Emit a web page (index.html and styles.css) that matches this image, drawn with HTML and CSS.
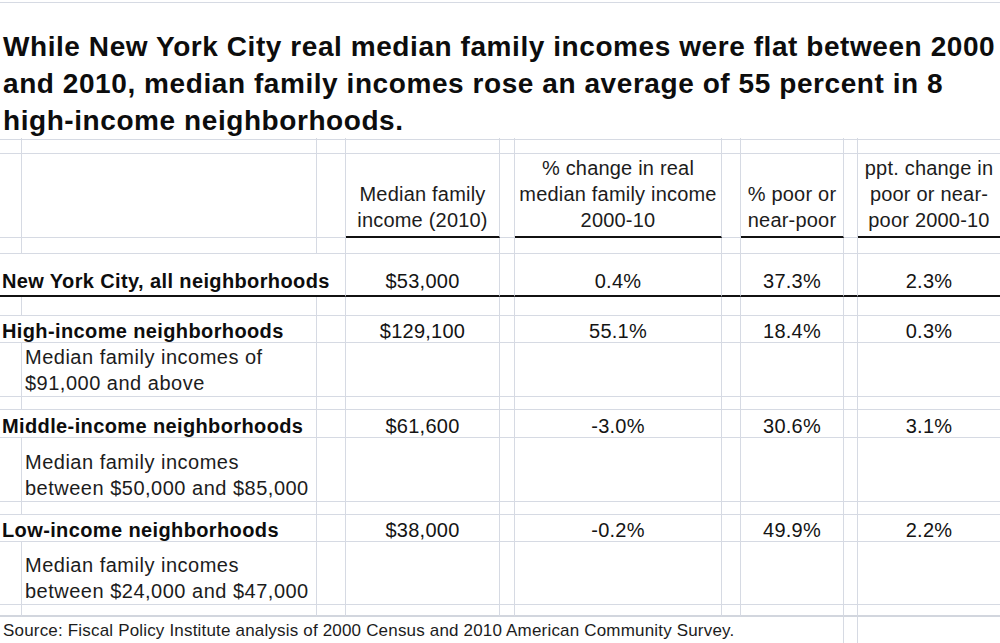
FILE: index.html
```html
<!DOCTYPE html>
<html lang="en">
<head>
<meta charset="utf-8">
<title>NYC median family incomes by neighborhood</title>
<link rel="stylesheet" href="styles.css">
</head>
<body>
<div class="sheet">
  <div class="row r-top"><div class="c span10"></div></div>

  <div class="row r-title">
    <div class="c span10 title">While New York City real median family incomes were flat between 2000<br>and 2010, median family incomes rose an average of 55 percent in 8<br>high-income neighborhoods.</div>
  </div>

  <div class="row r-g16"><div class="c"></div><div class="c"></div><div class="c"></div><div class="c"></div><div class="c"></div><div class="c"></div><div class="c"></div><div class="c"></div><div class="c"></div><div class="c"></div></div>

  <div class="row r-head">
    <div class="c"></div><div class="c"></div><div class="c"></div>
    <div class="c ctr hd">Median family<br>income (2010)</div>
    <div class="c"></div>
    <div class="c ctr hd">% change in real<br>median family income<br>2000-10</div>
    <div class="c"></div>
    <div class="c ctr hd">% poor or<br>near-poor</div>
    <div class="c"></div>
    <div class="c ctr hd">ppt. change in<br>poor or near-<br>poor 2000-10</div>
  </div>

  <div class="row r-g16"><div class="c"></div><div class="c"></div><div class="c"></div><div class="c"></div><div class="c"></div><div class="c"></div><div class="c"></div><div class="c"></div><div class="c"></div><div class="c"></div></div>

  <div class="row r-nyc total">
    <div class="c span3 lab">New York City, all neighborhoods</div>
    <div class="c ctr val">$53,000</div>
    <div class="c"></div>
    <div class="c ctr val">0.4%</div>
    <div class="c"></div>
    <div class="c ctr val">37.3%</div>
    <div class="c"></div>
    <div class="c ctr val">2.3%</div>
  </div>

  <div class="row r-g19"><div class="c"></div><div class="c"></div><div class="c"></div><div class="c"></div><div class="c"></div><div class="c"></div><div class="c"></div><div class="c"></div><div class="c"></div><div class="c"></div></div>

  <div class="row r-lab27 group">
    <div class="c span2 lab">High-income neighborhoods</div>
    <div class="c"></div>
    <div class="c ctr val">$129,100</div>
    <div class="c"></div>
    <div class="c ctr val">55.1%</div>
    <div class="c"></div>
    <div class="c ctr val">18.4%</div>
    <div class="c"></div>
    <div class="c ctr val">0.3%</div>
  </div>
  <div class="row r-sub54">
    <div class="c"></div>
    <div class="c sub">Median family incomes of<br>$91,000 and above</div>
    <div class="c"></div><div class="c"></div><div class="c"></div><div class="c"></div><div class="c"></div><div class="c"></div><div class="c"></div><div class="c"></div>
  </div>

  <div class="row r-g13"><div class="c"></div><div class="c"></div><div class="c"></div><div class="c"></div><div class="c"></div><div class="c"></div><div class="c"></div><div class="c"></div><div class="c"></div><div class="c"></div></div>

  <div class="row r-lab28 group">
    <div class="c span2 lab">Middle-income neighborhoods</div>
    <div class="c"></div>
    <div class="c ctr val">$61,600</div>
    <div class="c"></div>
    <div class="c ctr val">-3.0%</div>
    <div class="c"></div>
    <div class="c ctr val">30.6%</div>
    <div class="c"></div>
    <div class="c ctr val">3.1%</div>
  </div>
  <div class="row r-sub64">
    <div class="c"></div>
    <div class="c sub">Median family incomes<br>between $50,000 and $85,000</div>
    <div class="c"></div><div class="c"></div><div class="c"></div><div class="c"></div><div class="c"></div><div class="c"></div><div class="c"></div><div class="c"></div>
  </div>

  <div class="row r-g13"><div class="c"></div><div class="c"></div><div class="c"></div><div class="c"></div><div class="c"></div><div class="c"></div><div class="c"></div><div class="c"></div><div class="c"></div><div class="c"></div></div>

  <div class="row r-lab27 group">
    <div class="c span2 lab">Low-income neighborhoods</div>
    <div class="c"></div>
    <div class="c ctr val">$38,000</div>
    <div class="c"></div>
    <div class="c ctr val">-0.2%</div>
    <div class="c"></div>
    <div class="c ctr val">49.9%</div>
    <div class="c"></div>
    <div class="c ctr val">2.2%</div>
  </div>
  <div class="row r-sub63">
    <div class="c"></div>
    <div class="c sub">Median family incomes<br>between $24,000 and $47,000</div>
    <div class="c"></div><div class="c"></div><div class="c"></div><div class="c"></div><div class="c"></div><div class="c"></div><div class="c"></div><div class="c"></div>
  </div>

  <div class="row r-g12 end"><div class="c"></div><div class="c"></div><div class="c"></div><div class="c"></div><div class="c"></div><div class="c"></div><div class="c"></div><div class="c"></div><div class="c"></div><div class="c"></div></div>

  <div class="row r-src">
    <div class="c span7 src">Source: Fiscal Policy Institute analysis of 2000 Census and 2010 American Community Survey.</div>
    <div class="c"></div><div class="c"></div><div class="c"></div>
  </div>
</div>
</body>
</html>
```

FILE: styles.css
```css
:root {
  --grid: #d6dae3;
}

html, body {
  margin: 0;
  padding: 0;
  background: #ffffff;
}

body {
  font-family: "Liberation Sans", Arial, sans-serif;
  color: #141414;
}

.sheet {
  width: 1000px;
  height: 643px;
  overflow: hidden;
}

.row {
  display: grid;
  grid-template-columns: 22px 295px 29px 154px 15px 207px 19px 103px 14px 142px;
}

.c {
  box-sizing: border-box;
  border-right: 1px solid var(--grid);
  border-bottom: 1px solid var(--grid);
  display: flex;
  align-items: flex-end;
  white-space: nowrap;
  font-size: 20px;
  line-height: 26px;
  padding-bottom: 0;
  min-width: 0;
}

.c:last-child {
  border-right: none;
}

.span2 { grid-column: span 2; }
.span3 { grid-column: span 3; }
.span7 { grid-column: span 7; }
.span10 { grid-column: span 10; }

.ctr {
  justify-content: center;
  text-align: center;
}

/* row heights */
.r-top { height: 3px; }
.r-title { height: 135px; }
.r-g16 { height: 16px; }
.r-head { height: 84px; }
.r-nyc { height: 43px; }
.r-g19 { height: 19px; }
.r-lab27 { height: 27px; }
.r-lab28 { height: 28px; }
.r-sub54 { height: 54px; }
.r-sub63 { height: 63px; }
.r-sub64 { height: 64px; }
.r-g13 { height: 13px; }
.r-g12 { height: 12px; }
.r-src { height: 26px; }

.title {
  font-size: 28px;
  letter-spacing: 0.57px;
  line-height: 37px;
  font-weight: bold;
  color: #0d0d0d;
  padding-left: 3px;
  display: block;
  padding-top: 25px;
}

.hd {
  border-bottom: 2px solid #111;
  padding-bottom: 3px;
  letter-spacing: 0.2px;
  color: #1c1c1c;
}

.val {
  letter-spacing: 0.25px;
}

.total .c {
  border-bottom: 2px solid #111;
  padding-bottom: 1px;
}

.group .c {
  line-height: 22px;
}

.lab {
  font-weight: bold;
  letter-spacing: 0.38px;
  padding-left: 2px;
  color: #0d0d0d;
}

.sub {
  padding-left: 3px;
  padding-bottom: 0;
  letter-spacing: 0.5px;
  color: #1c1c1c;
}

.end .c {
  border-bottom: 2px solid #d2d6de;
}

.src {
  border-right: none;
  font-size: 17px;
  letter-spacing: 0.18px;
  line-height: 22px;
  padding-left: 3px;
  padding-bottom: 1px;
  color: #1c1c1c;
}

.r-src .c {
  border-bottom: none;
}
```
